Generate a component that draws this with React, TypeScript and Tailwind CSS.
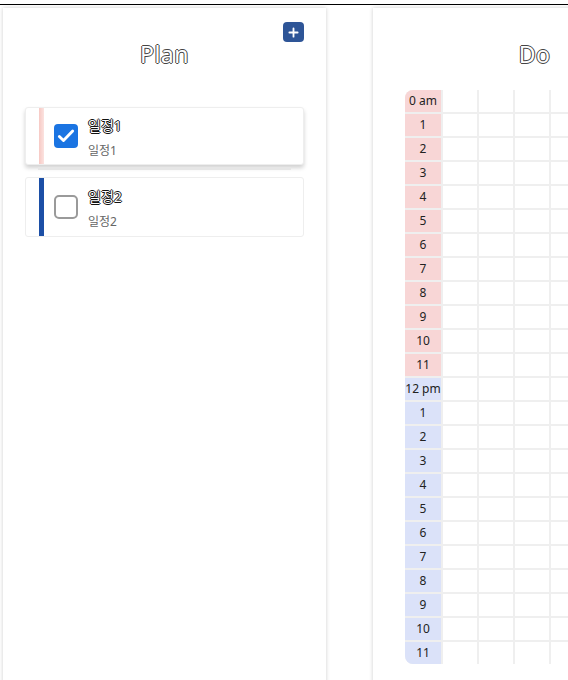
import React from 'react';

const hours = [
  '0 am', '1', '2', '3', '4', '5', '6', '7', '8', '9', '10', '11',
  '12 pm', '1', '2', '3', '4', '5', '6', '7', '8', '9', '10', '11',
];

const plans = [
  { id: 1, title: '일정1', desc: '일정1', done: true, bar: 'bg-gradient-to-r from-[#f7c9c4] to-[#fbe3e0]' },
  { id: 2, title: '일정2', desc: '일정2', done: false, bar: 'bg-[#1c4fa6]' },
];

function CheckBox({ checked }: { checked: boolean }) {
  if (checked) {
    return (
      <div className="w-6 h-6 rounded-[4px] bg-[#1a74e2] flex items-center justify-center shrink-0">
        <svg width="20" height="20" viewBox="0 0 24 24" fill="none">
          <path d="M4 12.5l5 5L20 6" stroke="white" strokeWidth="3.4" strokeLinecap="round" strokeLinejoin="round" />
        </svg>
      </div>
    );
  }
  return <div className="w-6 h-6 rounded-[5px] border-2 border-[#9a9a9a] bg-white shrink-0" />;
}

export default function App() {
  return (
    <div className="w-screen h-[680px] overflow-hidden bg-white pt-1 antialiased font-['Noto_Sans','Noto_Sans_CJK_KR',sans-serif]">
      <div className="border-t border-black h-full">
        <div className="flex gap-[47px] pl-[3px] pt-[3px]">
          {/* Plan */}
          <div className="relative w-[323px] h-[700px] shrink-0 bg-white shadow-[0_0_4px_rgba(0,0,0,0.2)]">
            <button className="absolute top-[14px] right-[22px] w-[21px] h-[20px] rounded-[4px] bg-[#2e5597] flex items-center justify-center">
              <svg width="11" height="11" viewBox="0 0 12 12">
                <path d="M6 1.5v9M1.5 6h9" stroke="white" strokeWidth="2" strokeLinecap="round" />
              </svg>
            </button>
            <div className="h-[92px] flex items-center justify-center">
              <h1 className="text-[23px] text-white tracking-[0.5px] [text-shadow:-1px_0_#444,1px_0_#444,0_-1px_#444,0_1px_#444]">Plan</h1>
            </div>
            <div className="mt-[7px] px-[22px]">
              {plans.map((p, i) => (
                <div key={p.id}>
                  <div
                    className={`flex items-center bg-white border border-[#eeeeee] rounded-[3px] pl-[13px] ${
                      i === 0 ? 'h-[58px] shadow-[0_3px_4px_rgba(0,0,0,0.18)]' : 'h-[60px]'
                    }`}
                  >
                    <div className={`w-[5px] self-stretch ${p.bar}`} />
                    <div className="ml-[10px]">
                      <CheckBox checked={p.done} />
                    </div>
                    <div className="ml-[10px] flex flex-col gap-[9px] pt-[3px]">
                      <span className="text-[14px] leading-[17px] text-white [text-shadow:-1px_0_#111,1px_0_#111,0_-1px_#111,0_1px_#111]">{p.title}</span>
                      <span className="text-[12px] leading-[16px] text-[#666]">{p.desc}</span>
                    </div>
                  </div>
                  {i === 0 && <div className="h-[3px] bg-[#e6e6e6] ml-[13px] mr-[13px] mt-[2px] mb-[7px]" />}
                </div>
              ))}
            </div>
          </div>

          {/* Do */}
          <div className="w-[323px] h-[700px] shrink-0 bg-white shadow-[0_0_4px_rgba(0,0,0,0.2)]">
            <div className="h-[79px] flex items-center justify-center pt-[13px]">
              <h1 className="text-[23px] text-white tracking-[0.5px] [text-shadow:-1px_0_#444,1px_0_#444,0_-1px_#444,0_1px_#444]">Do</h1>
            </div>
            <div className="pl-[32px]">
              <div className="inline-grid grid-cols-[36px_repeat(7,34px)] gap-[2px] bg-[#efefef] rounded-l-[8px] overflow-hidden">
                {hours.map((h, r) => (
                  <React.Fragment key={r}>
                    <div
                      className={`h-[22px] flex items-center justify-center text-[12px] text-[#222] ${
                        r < 12 ? 'bg-[#f8d6d6]' : 'bg-[#dbe2f9]'
                      }`}
                    >
                      {h}
                    </div>
                    {Array.from({ length: 7 }).map((_, c) => (
                      <div key={c} className="h-[22px] bg-white" />
                    ))}
                  </React.Fragment>
                ))}
              </div>
            </div>
          </div>
        </div>
      </div>
    </div>
  );
}
